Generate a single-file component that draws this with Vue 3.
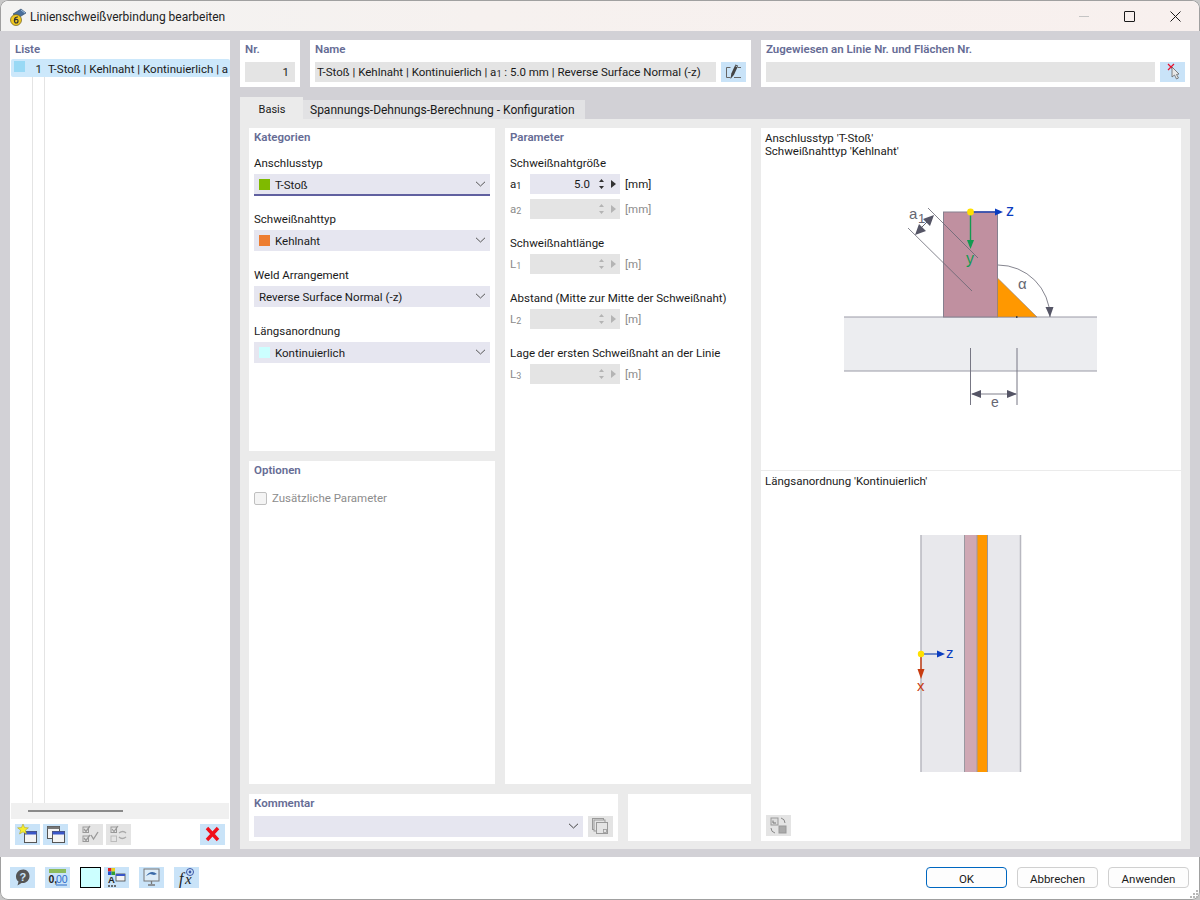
<template>
  <div class="window">
    <!-- title bar -->
    <div class="titlebar">
      <svg class="app-icon" width="18" height="18" viewBox="0 0 18 18">
        <path d="M4 6 L12 1 L17 5 L9 10 Z" fill="#4a6f9c" stroke="#2e4a6b" stroke-width=".6" />
        <path d="M12 2 L16 5" stroke="#9fc0e0" />
        <circle cx="7" cy="12" r="5.5" fill="#f0c820" stroke="#6a5a20" stroke-width=".7" />
        <path d="M9 9 Q5.5 8.8 5.4 12.5 Q5.5 15 7.2 15 Q9 15 9 13 Q9 11.2 7.2 11.3 Q6 11.4 5.5 12.4" fill="none" stroke="#333" stroke-width="1.2" />
      </svg>
      <span class="title">Linienschweißverbindung bearbeiten</span>
      <div class="win-controls">
        <span class="win-min"></span>
        <span class="win-max"></span>
        <svg class="win-close" width="11" height="11" viewBox="0 0 11 11">
          <path d="M.5 .5 L10.5 10.5 M10.5 .5 L.5 10.5" stroke="#1a1a1a" stroke-width="1" />
        </svg>
      </div>
    </div>

    <div class="content">
      <!-- list -->
      <div class="list-panel">
        <div class="heading list-heading">Liste</div>
        <div class="list-body">
          <div class="list-row">
            <span class="list-swatch"></span>
            <span class="list-no">1</span>
            <span class="list-text">T-Stoß | Kehlnaht | Kontinuierlich | a</span>
          </div>
          <span class="list-line line-a"></span>
          <span class="list-line line-b"></span>
        </div>
        <div class="list-scroll"><span class="list-thumb"></span></div>
        <div class="list-tools">
          <button class="tool">
            <svg width="25" height="21" viewBox="0 0 25 21">
              <rect x="9.5" y="7.5" width="12" height="11" fill="#f4f4f4" stroke="#555" />
              <rect x="9.5" y="7.5" width="12" height="3" fill="#3a56c8" />
              <path d="M8 0 L9.6 3.6 L13.4 3.8 L10.4 6.2 L11.5 10 L8 7.9 L4.5 10 L5.6 6.2 L2.6 3.8 L6.4 3.6 Z" fill="#f6ee30" stroke="#a89a20" stroke-width=".5" />
            </svg>
          </button>
          <button class="tool">
            <svg width="25" height="21" viewBox="0 0 25 21">
              <rect x="4.5" y="2.5" width="12" height="12" fill="#f4f4f4" stroke="#555" />
              <rect x="4.5" y="2.5" width="12" height="2.5" fill="#777" />
              <rect x="9.5" y="7.5" width="12" height="11" fill="#f4f4f4" stroke="#555" />
              <rect x="9.5" y="7.5" width="12" height="3" fill="#3a56c8" />
            </svg>
          </button>
          <button class="tool off gap-left">
            <svg width="25" height="21" viewBox="0 0 25 21">
              <rect x="5" y="3" width="5.5" height="5.5" fill="none" stroke="#999" />
              <rect x="5" y="12" width="5.5" height="5.5" fill="none" stroke="#999" />
              <path d="M6 5 L8 7.5 L12 2 M6 14 L8 16.5 L12 11 M13 11 L15.5 15 L20 8" fill="none" stroke="#999" stroke-width="1.3" />
            </svg>
          </button>
          <button class="tool off">
            <svg width="25" height="21" viewBox="0 0 25 21">
              <rect x="5" y="3" width="5.5" height="5.5" fill="none" stroke="#999" />
              <rect x="5" y="12" width="5.5" height="5.5" fill="none" stroke="#bbb" />
              <path d="M6 5 L8 7.5 L12 2" fill="none" stroke="#999" stroke-width="1.2" />
              <path d="M13 9 Q17 6 20 9 M20 13 Q16 16 13 13" fill="none" stroke="#aaa" stroke-width="1.4" />
            </svg>
          </button>
          <button class="tool push-right">
            <svg width="25" height="21" viewBox="0 0 25 21">
              <path d="M7 4 L18 16 M18 4 L7 16" stroke="#f0101c" stroke-width="3.4" />
            </svg>
          </button>
        </div>
      </div>

      <div class="main">
        <!-- top row -->
        <div class="top-row">
          <div class="box box-nr">
            <div class="heading">Nr.</div>
            <div class="input disabled right">1</div>
          </div>
          <div class="box box-name">
            <div class="heading">Name</div>
            <div class="input-row">
              <div class="input disabled grow">T-Stoß | Kehlnaht | Kontinuierlich | a<span class="sub">1</span> : 5.0 mm | Reverse Surface Normal (-z)</div>
              <button class="tool small">
                <svg width="25" height="20" viewBox="0 0 25 20">
                  <path d="M9.5 5.5 H5.5 V15.5 H9.5 M13 15.5 H20 M16.5 5.5 H20" fill="none" stroke="#666" stroke-width="1" />
                  <path d="M9.5 17 L10.3 11.5 L14.5 2.5 L17.2 3.8 L13 12.8 Z" fill="#444" />
                  <path d="M14.6 4 L16.4 4.8" stroke="#c9e3f8" stroke-width=".8" />
                </svg>
              </button>
            </div>
          </div>
          <div class="box box-assign">
            <div class="heading">Zugewiesen an Linie Nr. und Flächen Nr.</div>
            <div class="input-row">
              <div class="input disabled grow"></div>
              <button class="tool small">
                <svg width="25" height="20" viewBox="0 0 25 20">
                  <path d="M9 3 L15 9 M15 3 L9 9" stroke="#e8102c" stroke-width="1.2" transform="translate(-1 -1)" />
                  <path d="M12 5 L12 15 L14.5 13 L16.5 17 L18.5 16 L16.5 12.5 L19 12 Z" fill="#e8e8e8" stroke="#666" stroke-width=".8" />
                </svg>
              </button>
            </div>
          </div>
        </div>

        <!-- tabs -->
        <div class="tabs">
          <div class="tab active">Basis</div>
          <div class="tab">Spannungs-Dehnungs-Berechnung - Konfiguration</div>
        </div>

        <div class="tab-body">
          <div class="left-block">
            <div class="columns">
              <div class="side-stack">
                <div class="box group">
                  <div class="heading">Kategorien</div>
                  <div v-for="(f, i) in categories" :key="f.label" class="field">
                    <div class="field-label">{{ f.label }}</div>
                    <div class="select" :class="{ focused: i === 0 }">
                      <span v-if="f.color" class="swatch" :style="{ background: f.color }"></span>
                      <span class="select-text">{{ f.value }}</span>
                      <svg class="chevron" width="11" height="6" viewBox="0 0 11 6">
                        <path d="M1 .8 L5.5 5 L10 .8" fill="none" stroke="#555" stroke-width="1" />
                      </svg>
                    </div>
                  </div>
                </div>
                <div class="box group">
                  <div class="heading">Optionen</div>
                  <label class="check">
                    <span class="check-box"></span>
                    <span>Zusätzliche Parameter</span>
                  </label>
                </div>
              </div>

              <div class="box group">
                <div class="heading">Parameter</div>
                <div v-for="g in parameters" :key="g.label" class="param-group">
                  <div class="field-label">{{ g.label }}</div>
                  <div v-for="r in g.rows" :key="r.sym + r.idx" class="param-row" :class="{ dim: !r.value }">
                    <span class="param-sym">{{ r.sym }}<span class="sub">{{ r.idx }}</span></span>
                    <div class="spin">
                      <span class="spin-value">{{ r.value }}</span>
                      <svg width="9" height="14" viewBox="0 0 9 14" class="spin-arrows">
                        <path d="M4.5 2 L7 5 H2 Z M4.5 12 L7 9 H2 Z" />
                      </svg>
                      <svg width="6" height="8" viewBox="0 0 6 8" class="spin-next">
                        <path d="M1 0 L6 4 L1 8 Z" />
                      </svg>
                    </div>
                    <span class="param-unit">{{ r.unit }}</span>
                  </div>
                </div>
              </div>
            </div>

            <div class="bottom-row">
              <div class="box box-comment">
                <div class="heading">Kommentar</div>
                <div class="input-row">
                  <div class="select grow">
                    <svg class="chevron" width="11" height="6" viewBox="0 0 11 6">
                      <path d="M1 .8 L5.5 5 L10 .8" fill="none" stroke="#444" stroke-width="1" />
                    </svg>
                  </div>
                  <button class="tool small off">
                    <svg width="25" height="21" viewBox="0 0 25 21">
                      <rect x="4.5" y="2.5" width="11" height="11" fill="none" stroke="#999" />
                      <rect x="6" y="4" width="11" height="11" fill="#e4e4e4" stroke="#999" />
                      <rect x="8.5" y="6.5" width="11" height="11" fill="#e4e4e4" stroke="#999" />
                      <rect x="15.5" y="13.5" width="3" height="3" fill="none" stroke="#999" stroke-width=".8" />
                    </svg>
                  </button>
                </div>
              </div>
              <div class="box box-blank"></div>
            </div>
          </div>

          <!-- diagrams -->
          <div class="box preview">
            <div class="preview-top">
              <div class="preview-text">Anschlusstyp 'T-Stoß'<br />Schweißnahttyp 'Kehlnaht'</div>
              <svg class="drawing" width="420" height="311" viewBox="761 158 420 311">
                <rect x="844" y="317" width="253" height="54" fill="#ecedf0" />
                <path d="M844 317 H1097 M844 371 H1097" stroke="#9a9aa6" stroke-width="1" />
                <rect x="943.5" y="212" width="54" height="105" fill="#c090a0" stroke="#85808f" stroke-width="1" />
                <path d="M997.5 278 L1037 317 H997.5 Z" fill="#ff9800" stroke="#85808f" stroke-width=".6" />
                <path d="M928 208 L978 258 M908 228 L972 291" stroke="#666672" stroke-width=".8" />
                <path d="M917 232 L931 218" stroke="#666672" stroke-width="1" />
                <path d="M934 215 L923 219 L930 226 Z M915 235 L926 231 L919 224 Z" fill="#555566" />
                <text x="909" y="219" class="dim-text" font-size="15">a</text>
                <text x="918" y="223" class="dim-text" font-size="13">1</text>
                <path d="M998 265 A52 52 0 0 1 1050 317" fill="none" stroke="#666672" stroke-width=".8" />
                <path d="M1050 317 L1045.5 307 H1053.5 Z" fill="#555566" />
                <text x="1018" y="289" class="dim-text" font-size="15">α</text>
                <path d="M970.5 348 V405 M1017 348 V405" stroke="#777784" stroke-width="1" />
                <path d="M972 394 H1016" stroke="#aaaab2" stroke-width="1.4" />
                <path d="M971 394 L981 390 V398 Z M1017 394 L1007 390 V398 Z" fill="#555566" />
                <text x="991" y="407" class="dim-text" font-size="14">e</text>
                <rect x="1016" y="316" width="1.5" height="2" fill="#444" />
                <path d="M971 212 H996" stroke="#2a48b0" stroke-width="1.6" />
                <path d="M1003 212 L995 208.5 V215.5 Z" fill="#0a3cc0" />
                <text x="1006" y="216" font-size="16" fill="#0a3cc0" class="axis">z</text>
                <path d="M970.5 213 V242" stroke="#129a50" stroke-width="1.4" />
                <path d="M970.5 249 L967 240 H974 Z" fill="#129a50" />
                <text x="966" y="264" font-size="16" fill="#129a50" class="axis">y</text>
                <circle cx="970.5" cy="212" r="3.4" fill="#ffe000" />
              </svg>
            </div>
            <div class="preview-bottom">
              <div class="preview-text">Längsanordnung 'Kontinuierlich'</div>
              <svg class="drawing" width="420" height="345" viewBox="761 490 420 345">
                <rect x="921" y="535" width="100" height="237" fill="#e8e8ec" />
                <path d="M921 535 V772 M1020.5 535 V772" stroke="#b8b8c0" stroke-width="1.5" />
                <rect x="964.5" y="535" width="12.5" height="237" fill="#cfa8b4" />
                <rect x="977" y="535" width="10.5" height="237" fill="#ff9800" />
                <path d="M964.5 535 V772 M977 535 V772 M987.5 535 V772" stroke="#9a98a0" stroke-width="1" />
                <path d="M922 654 H939" stroke="#1f4ab0" stroke-width="1.2" />
                <path d="M945 654 L937 650.5 V657.5 Z" fill="#0a3cc0" />
                <text x="946" y="658" font-size="15" fill="#0a3cc0" class="axis">z</text>
                <path d="M921 655 V671" stroke="#c83c10" stroke-width="1.4" />
                <path d="M921 679 L917.5 669 H924.5 Z" fill="#c83c10" />
                <text x="917" y="691" font-size="15" fill="#c83c10" class="axis">x</text>
                <circle cx="921" cy="654" r="3.2" fill="#ffe000" />
              </svg>
              <button class="tool off preview-btn">
                <svg width="25" height="21" viewBox="0 0 25 21">
                  <rect x="5" y="3" width="7" height="7" fill="#ddd" stroke="#999" />
                  <path d="M7 8 V5.5 M7 8 H10" stroke="#777" />
                  <path d="M15 3 Q19 4 19 8 M5 13 Q5 17 9 18" fill="none" stroke="#888" />
                  <rect x="13" y="11" width="7" height="7" fill="#aaa" stroke="#999" />
                </svg>
              </button>
            </div>
          </div>
        </div>
      </div>
    </div>

    <!-- footer -->
    <div class="footer">
      <button class="tool foot">
        <svg width="25" height="21" viewBox="0 0 25 21">
          <path d="M13.5 2.5 C8.5 2.5 6 6 6 9.5 C6 12 7 13.5 8.5 14.5 L7.5 18.5 L11.5 16 C16.5 16.5 19.5 13 19.5 9 C19.5 5.5 17 2.5 13.5 2.5 Z" fill="#555" />
          <text x="9.5" y="14" font-size="11" font-weight="700" fill="#c9e3f8" class="axis">?</text>
        </svg>
      </button>
      <button class="tool foot">
        <svg width="25" height="21" viewBox="0 0 25 21">
          <rect x="4" y="2" width="17" height="4" fill="#8cbc5c" />
          <text x="3.5" y="16" font-size="10.5" font-weight="700" fill="#222" class="axis">0,</text>
          <text x="11" y="16" font-size="10.5" fill="#2a6ac8" class="axis">00</text>
          <path d="M11 18 H22" stroke="#2a6ac8" />
        </svg>
      </button>
      <span class="color-box"></span>
      <button class="tool foot tight">
        <svg width="25" height="21" viewBox="0 0 25 21">
          <rect x="4" y="1" width="3.5" height="3.5" fill="#e02020" />
          <rect x="7.5" y="1" width="3.5" height="3.5" fill="#e8d020" />
          <rect x="4" y="4.5" width="3.5" height="3.5" fill="#2050d0" />
          <rect x="7.5" y="4.5" width="3.5" height="3.5" fill="#30a030" />
          <text x="4" y="16" font-size="9.5" font-weight="700" fill="#222" class="axis">A</text>
          <rect x="12" y="7" width="9" height="7" fill="#f4f4f4" stroke="#444" stroke-width=".8" />
          <rect x="12" y="7" width="9" height="2" fill="#3a56c8" />
          <path d="M4 19 H13" stroke="#444" stroke-dasharray="2 1" stroke-width="1.5" />
        </svg>
      </button>
      <button class="tool foot">
        <svg width="25" height="21" viewBox="0 0 25 21">
          <rect x="5" y="2" width="15" height="12" fill="#dcecf8" stroke="#777" />
          <path d="M7 9 Q12 2 18 7 L15 8 L11 7 Z" fill="#3a6aa8" />
          <path d="M12.5 14 V17 M9 18 H16" stroke="#777" stroke-width="1.3" />
        </svg>
      </button>
      <button class="tool foot">
        <svg width="25" height="21" viewBox="0 0 25 21">
          <text x="5" y="17" font-size="16" font-style="italic" fill="#222" class="serif">f</text>
          <text x="11" y="17" font-size="15" font-style="italic" fill="#222" class="serif">x</text>
          <circle cx="16" cy="5" r="3.5" fill="none" stroke="#3a56a8" />
          <circle cx="16" cy="5" r="1.4" fill="#3a56a8" />
        </svg>
      </button>
      <div class="actions">
        <button class="btn primary">OK</button>
        <button class="btn">Abbrechen</button>
        <button class="btn">Anwenden</button>
      </div>
      <svg class="grip" width="10" height="10" viewBox="0 0 10 10">
        <path d="M7 1h2v2H7z M4 4h2v2H4z M7 4h2v2H7z M1 7h2v2H1z M4 7h2v2H4z M7 7h2v2H7z" fill="#b8b8b8" />
      </svg>
    </div>
  </div>
</template>

<script setup>
const categories = [
  { label: 'Anschlusstyp', value: 'T-Stoß', color: '#7fba00' },
  { label: 'Schweißnahttyp', value: 'Kehlnaht', color: '#ed7d31' },
  { label: 'Weld Arrangement', value: 'Reverse Surface Normal (-z)' },
  { label: 'Längsanordnung', value: 'Kontinuierlich', color: '#ccffff' }
]

const parameters = [
  {
    label: 'Schweißnahtgröße',
    rows: [
      { sym: 'a', idx: '1', value: '5.0', unit: '[mm]' },
      { sym: 'a', idx: '2', value: '', unit: '[mm]' }
    ]
  },
  { label: 'Schweißnahtlänge', rows: [{ sym: 'L', idx: '1', value: '', unit: '[m]' }] },
  { label: 'Abstand (Mitte zur Mitte der Schweißnaht)', rows: [{ sym: 'L', idx: '2', value: '', unit: '[m]' }] },
  { label: 'Lage der ersten Schweißnaht an der Linie', rows: [{ sym: 'L', idx: '3', value: '', unit: '[m]' }] }
]
</script>

<style>
html, body {
  margin: 0;
  background: #c8c8c8;
}
</style>

<style scoped>
.window {
  width: 1200px;
  height: 900px;
  box-sizing: border-box;
  display: flex;
  flex-direction: column;
  background: #fff;
  border-radius: 8px;
  overflow: hidden;
  box-shadow: inset 0 0 0 1px #a0a0a0;
  font-family: Roboto, "Liberation Sans", sans-serif;
  font-size: 11.5px;
  color: #1a1a1a;
}

button {
  padding: 0;
  border: 0;
  font: inherit;
}

.titlebar {
  height: 31px;
  flex: none;
  display: flex;
  align-items: center;
  padding-left: 8px;
  margin: 1px 1px -1px;
  background: linear-gradient(90deg, #f3f3f2 0%, #f6f1ef 40%, #f8f0ee 100%);
  border-radius: 8px 8px 0 0;
}

.app-icon {
  margin-right: 3px;
}

.title {
  font-size: 12px;
  color: #222;
}

.win-controls {
  margin-left: auto;
  display: flex;
  align-items: center;
}

.win-min {
  width: 10px;
  height: 1px;
  background: #c4c4c4;
  margin-right: 35px;
}

.win-max {
  width: 9px;
  height: 9px;
  border: 1px solid #1a1a1a;
  border-radius: 1px;
  margin-right: 35px;
}

.win-close {
  margin-right: 18px;
}

.content {
  flex: 1;
  min-height: 0;
  display: flex;
  gap: 10px;
  padding: 9px 10px 8px;
  background: #d2d1d6;
}

.box {
  background: #fff;
  box-sizing: border-box;
}

.heading {
  font-weight: 600;
  color: #666c95;
  line-height: 16px;
  height: 16px;
  margin-top: 1px;
}

.list-panel {
  width: 220px;
  flex: none;
  display: flex;
  flex-direction: column;
  background: #fff;
}

.list-heading {
  padding-left: 5px;
  margin-bottom: 2px;
}

.list-body {
  flex: 1;
  position: relative;
  overflow: hidden;
}

.list-row {
  height: 18px;
  margin-left: 1px;
  display: flex;
  align-items: center;
  background: #cce8fb;
  border-radius: 2px;
  white-space: nowrap;
  overflow: hidden;
  position: relative;
  z-index: 1;
}

.list-swatch {
  width: 11px;
  height: 11px;
  margin: 0 0 4px 3px;
  background: #99d9f5;
  flex: none;
}

.list-no {
  width: 17px;
  padding-top: 1px;
  text-align: right;
  flex: none;
}

.list-text {
  margin-left: 6px;
  padding-top: 1px;
  letter-spacing: .02px;
}

.list-line {
  position: absolute;
  top: 0;
  bottom: 0;
  width: 1px;
  background: #e4e4e4;
}

.line-a {
  left: 22px;
}

.line-b {
  left: 34px;
}

.list-scroll {
  height: 16px;
  margin: 0 1px;
  background: #f0f0f0;
  display: flex;
  align-items: center;
  flex: none;
}

.list-thumb {
  width: 95px;
  height: 2px;
  background: #8a8a8a;
  margin-left: 17px;
}

.list-tools {
  height: 30px;
  flex: none;
  display: flex;
  gap: 3px;
  padding: 5px 5px 4px;
  box-sizing: border-box;
}

.tool {
  width: 25px;
  height: 21px;
  flex: none;
  background: #c9e3f8;
  display: flex;
  align-items: center;
  justify-content: center;
}

.tool.small {
  height: 20px;
}

.tool.off {
  background: #e4e4e4;
}

.input-row .select + .tool.small {
  height: 21px;
}

.gap-left {
  margin-left: 7px;
}

.push-right {
  margin-left: auto;
}

.main {
  flex: 1;
  min-width: 0;
  display: flex;
  flex-direction: column;
}

.top-row {
  display: flex;
  gap: 10px;
  height: 47px;
  flex: none;
}

.top-row .box {
  padding: 0 5px;
}

.box-nr {
  width: 60px;
}

.box-name {
  width: 441px;
}

.box-assign {
  flex: 1;
}

.input {
  height: 20px;
  line-height: 20px;
  box-sizing: border-box;
  padding: 0 6px 0 2px;
  margin-top: 5px;
  white-space: nowrap;
  overflow: hidden;
}

.input-row .input {
  margin-top: 0;
}

.disabled {
  background: #e4e4e4;
}

.right {
  text-align: right;
}

.input-row {
  display: flex;
  gap: 5px;
  margin-top: 5px;
}

.grow {
  flex: 1;
  min-width: 0;
}

.tabs {
  display: flex;
  align-items: flex-end;
  height: 22px;
  margin-top: 10px;
  flex: none;
}

.tab {
  height: 19px;
  line-height: 21px;
  padding: 0 10px 0 7px;
  background: #e2e2e4;
  width: 282px;
  box-sizing: border-box;
  font-size: 12px;
  white-space: nowrap;
}

.tab.active {
  height: 22px;
  line-height: 26px;
  width: 63px;
  padding: 0 0 0 1px;
  text-align: center;
  background: #ebebeb;
  font-size: 11px;
}

.tab-body {
  flex: 1;
  min-height: 0;
  display: flex;
  gap: 10px;
  padding: 9px 9px 8px;
  background: #ebebeb;
}

.left-block {
  width: 502px;
  flex: none;
  display: flex;
  flex-direction: column;
  gap: 10px;
}

.columns {
  flex: 1;
  min-height: 0;
  display: grid;
  grid-template-columns: 246px 246px;
  gap: 10px;
}

.side-stack {
  display: grid;
  grid-template-rows: 1fr 1fr;
  gap: 10px;
}

.group {
  padding: 0 5px;
}

.field {
  margin-top: 9px;
}

.field-label {
  height: 18px;
  line-height: 18px;
  white-space: nowrap;
}

.field + .field {
  margin-top: 15px;
}

.select {
  height: 21px;
  margin-top: 2px;
  box-sizing: border-box;
  background: #e6e6f0;
  display: flex;
  align-items: center;
  position: relative;
  padding-left: 5px;
}

.select-text {
  padding-top: 1px;
}

.input-row .select {
  margin-top: 0;
}

.select.focused {
  height: 22px;
  margin-bottom: -1px;
  border-bottom: 2px solid #6060a0;
}

.swatch {
  width: 11px;
  height: 11px;
  margin-right: 5px;
}

.chevron {
  position: absolute;
  right: 4px;
  top: 7px;
}

.check {
  display: flex;
  align-items: center;
  gap: 5px;
  margin-top: 13px;
  color: #8c8c8c;
}

.check-box {
  width: 11px;
  height: 11px;
  border: 1px solid #c0c0c0;
  border-radius: 2px;
  background: #f4f4f4;
}

.param-group {
  margin-top: 15px;
}

.heading + .param-group {
  margin-top: 9px;
}

.param-group .field-label {
  margin-bottom: 2px;
}

.param-row {
  display: flex;
  align-items: center;
  height: 20px;
  margin-top: 5px;
}

.field-label + .param-row {
  margin-top: 0;
}

.param-sym {
  width: 20px;
  flex: none;
}

.param-row.dim .param-sym,
.param-row.dim .param-unit {
  color: #8c8c8c;
}

.sub {
  font-size: 9px;
  vertical-align: -1px;
}

.spin {
  width: 90px;
  height: 20px;
  background: #e6e6f0;
  display: flex;
  align-items: center;
  justify-content: flex-end;
  padding-right: 4px;
  box-sizing: border-box;
  fill: #333;
}

.param-row.dim .spin {
  background: #e4e4e4;
  fill: #b4b4b4;
}

.spin-value {
  margin-right: 7px;
}

.spin-next {
  margin-left: 4px;
}

.param-unit {
  margin-left: 5px;
}

.bottom-row {
  height: 47px;
  flex: none;
  display: flex;
  gap: 10px;
}

.box-comment {
  width: 369px;
  padding: 0 5px;
}

.box-blank {
  flex: 1;
}

.preview {
  flex: 1;
  display: flex;
  flex-direction: column;
}

.preview-top {
  height: 343px;
  flex: none;
  box-sizing: border-box;
  border-bottom: 1px solid #ebebeb;
  overflow: hidden;
}

.preview-bottom {
  flex: 1;
  position: relative;
  overflow: hidden;
}

.preview-text {
  padding: 4px 4px 0;
  line-height: 13px;
  box-sizing: border-box;
}

.preview-top .preview-text {
  height: 30px;
}

.preview-bottom .preview-text {
  height: 19px;
  padding-top: 4px;
}

.drawing {
  display: block;
}

.dim-text {
  fill: #666672;
  font-family: "Liberation Sans", sans-serif;
}

.axis {
  font-family: "Liberation Sans", sans-serif;
}

.serif {
  font-family: "Liberation Serif", serif;
}

.preview-btn {
  position: absolute;
  left: 5px;
  bottom: 5px;
}

.footer {
  height: 43px;
  flex: none;
  display: flex;
  align-items: center;
  padding: 0 11px 2px 10px;
  box-sizing: border-box;
  position: relative;
}

.foot {
  margin-right: 10px;
}

.foot.tight {
  margin-left: -7px;
}

.color-box {
  width: 19px;
  height: 19px;
  border: 1px solid #000;
  background: #ccffff;
  margin-right: 10px;
  flex: none;
}

.actions {
  margin-left: auto;
  display: flex;
  gap: 10px;
}

.btn {
  width: 81px;
  height: 21px;
  box-sizing: border-box;
  padding-top: 2px;
  background: #fdfdfd;
  border: 1px solid #d0d0d0;
  border-radius: 4px;
  color: #1a1a1a;
}

.btn.primary {
  border-color: #0067c0;
}

.grip {
  position: absolute;
  right: 1px;
  bottom: 1px;
}
</style>
